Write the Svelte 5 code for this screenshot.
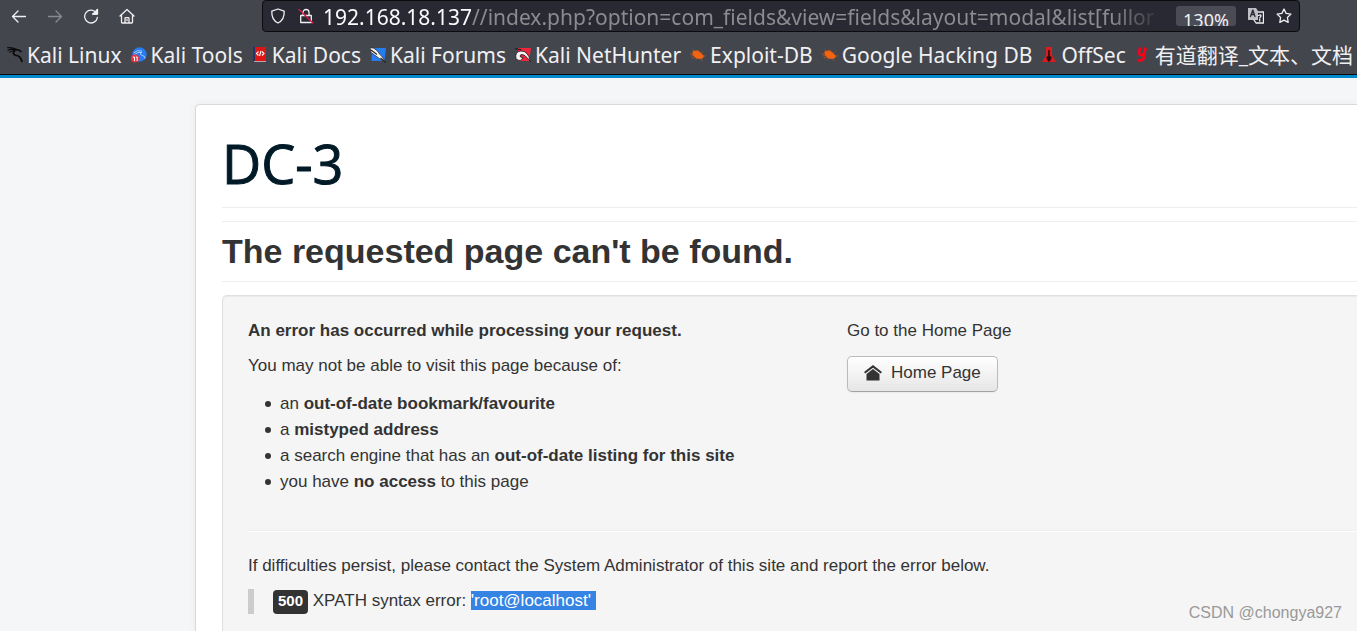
<script lang="ts">
	type Bookmark = { icon: string; label: string };

	const bookmarks: Bookmark[] = [
		{ icon: 'linux', label: 'Kali Linux' },
		{ icon: 'tools', label: 'Kali Tools' },
		{ icon: 'docs', label: 'Kali Docs' },
		{ icon: 'forums', label: 'Kali Forums' },
		{ icon: 'nethunter', label: 'Kali NetHunter' },
		{ icon: 'exploit', label: 'Exploit-DB' },
		{ icon: 'exploit', label: 'Google Hacking DB' },
		{ icon: 'offsec', label: 'OffSec' },
		{ icon: 'youdao', label: '有道翻译_文本、文档' }
	];
</script>

{#snippet favicon(name: string)}
	<svg class="favicon" viewBox="0 0 16 16" aria-hidden="true">
		{#if name === 'linux'}
			<path d="M0 .8Q5 0 9.500 2.500M.5 3.500Q5 1.200 8.500 3.500M2.500 5.500Q5 3 8 4.500" fill="none" stroke="#0b0b0c" stroke-width="1.1" />
			<path d="M8 2.800q4-.5 6.500 2.200M8 3Q4.500 6.500 8.500 8.300q5 0 6.500 6.700" fill="none" stroke="#0b0b0c" stroke-width="1.8" />
		{:else if name === 'tools'}
			<circle cx="8.5" cy="7.5" r="7.2" fill="#267bf0" />
			<path d="M2.500 6Q6 2.500 11 4M3.500 7.500Q7 4.500 11 5.500M10 5q-1.500 3 1.500 3.500 2.500.5 2.500 3" fill="none" stroke="#cfe2ff" stroke-width=".8" />
			<circle cx="4" cy="11.500" r="4" fill="#ec3440" />
			<path d="M1.800 10h1.700v4M5 10h1.200v4" fill="none" stroke="#fff" />
		{:else if name === 'docs'}
			<path d="M2 0h12v14H2z" fill="#dc1515" />
			<path d="M1 0h2v15H1z" fill="#20366b" />
			<path d="M2 14h12v1H2z" fill="#b9a9ae" />
			<path d="M6.500 4.500 4.500 6.500l2 2M10 4.500l2 2-2 2M9 4 7.500 9" fill="none" stroke="#fff" stroke-width="1.1" />
		{:else if name === 'forums'}
			<path d="M2 1h14l-1.500 13H1.500z" fill="#247cf0" />
			<path d="M0 .5q4 0 7 3l3 4q2 1 5.500 8-6-3.500-7.500-5L1 5.500z" fill="#f3f3ef" stroke="#202024" stroke-width=".7" />
			<path d="m1 3 6 4.500M10.500 11l5 4.500" stroke="#222" stroke-width="1.1" />
		{:else if name === 'nethunter'}
			<path d="M3 1h13l-2 13H3z" fill="#ee263a" />
			<path d="M1 12Q-.5 4.500 6 4q7-.5 9.500 10.500Q12 10 9 8 5 6.500 5 9q0 1.500 3 1.500-2 5-7 1.500z" fill="#f4f4f4" stroke="#171719" stroke-width=".8" />
			<path d="M0 1.500q3 1 6 1" fill="none" stroke="#171719" stroke-width="1" />
		{:else if name === 'exploit'}
			<path d="M2.500 4.500q4-2 7.500.5l4 4-1 2q-3 1.500-6 .5Q2 9 2.500 4.500z" fill="#f26411" />
			<path d="M5 5 3 2.500M8 5V2.500M11 6.500l2-2M5 10l-3 1M10 11l2.500 3M3 7H0M13 9h3M4 8.500 1 9M7 11l-1.500 2" stroke="#c8571a" stroke-width=".7" />
		{:else if name === 'offsec'}
			<path d="M5 0h6v8l4 7H1l4-7z" fill="#d81c20" />
			<path d="M7.200 3h1.600v6l2 1-1 3-1.800 2-1.800-2-1-3 2-1z" fill="#250c0e" />
		{:else}
			<path d="M5 .5 4 6q-.3 2 1.800 2 2 0 3.500-1.500l1-6M10.500 1 9 10q-.7 3.500-3.500 3.500H3" fill="none" stroke="#fc0018" stroke-width="2.600" />
		{/if}
	</svg>
{/snippet}

<div class="page">
	<header>
		<div class="toolbar">
			<nav class="controls" aria-label="Browser">
				<button aria-label="Back">
					<svg viewBox="0 0 16 16"><path d="M14.500 8.500H1.500M7 3 1.500 8.500 7 14" /></svg>
				</button>
				<button aria-label="Forward" disabled>
					<svg viewBox="0 0 16 16"><path d="M1.500 8.500h13M9 3 14.500 8.500 9 14" /></svg>
				</button>
				<button aria-label="Reload">
					<svg viewBox="0 0 16 16">
						<path d="M13.400 5A6.400 6.400 0 1 0 14.400 9.500M9.500 6H14V2" />
						<path d="M10 6h4.500V1.500z" class="solid" />
					</svg>
				</button>
				<button aria-label="Home">
					<svg viewBox="0 0 16 16"><path d="M1 8 8 1.500 15 8M2.500 7v7.200q0 .8.8.8h9.400q.8 0 .8-.8V7M6 15V10.500q0-.8.8-.8h2.400q.8 0 .8.8V15M8 11.500v1" /></svg>
				</button>
			</nav>

			<div class="address">
				<svg class="shield" viewBox="0 0 16 16"><path d="M8 1 14.200 3.200C14.500 9 12 13 8 15 4 13 1.500 9 1.800 3.200z" /></svg>
				<svg class="lock" viewBox="0 0 16 16">
					<path d="M5 7V4.500a3 3 0 0 1 6 0V7M2.700 7.500h10.600v7H2.700z" />
					<path d="m1 1.500 14 13.500" class="slash" />
				</svg>
				<div class="url" role="textbox" aria-label="Address" tabindex="0">
					192.168.18.137<span>//index.php?option=com_fields&view=fields&layout=modal&list[fullor</span>
				</div>
				<button class="zoom">130%</button>
				<button aria-label="Translate">
					<svg viewBox="0 0 16 16">
						<path d="M0 0h8l2 3v9H0z" class="leaf" />
						<path d="M2.500 8.500 4.800 2 7 8.500M3.300 6.500h3" class="mark" />
						<path d="M10.500 4h5v11H8l-2-3" />
						<path d="M10.500 7.500q2.500-1.500 2.500.5l-1.300 2M11.700 11.500v1.500" />
					</svg>
				</button>
				<button aria-label="Bookmark">
					<svg viewBox="0 0 16 16"><path d="m8 1 2.100 4.400 4.800.7-3.500 3.400.8 4.900L8 12.100l-4.200 2.300.8-4.900L1.100 6.100l4.800-.7z" /></svg>
				</button>
			</div>
		</div>

		<nav class="bookmarks" aria-label="Bookmarks">
			{#each bookmarks as bookmark}
				<a href="#bookmark">{@render favicon(bookmark.icon)}{bookmark.label}</a>
			{/each}
		</nav>
	</header>

	<main>
		<div class="brand">DC-3</div>
		<h1>The requested page can't be found.</h1>

		<section class="well">
			<div class="columns">
				<div>
					<p><strong>An error has occurred while processing your request.</strong></p>
					<p>You may not be able to visit this page because of:</p>
					<ul>
						<li>an <strong>out-of-date bookmark/favourite</strong></li>
						<li>a <strong>mistyped address</strong></li>
						<li>a search engine that has an <strong>out-of-date listing for this site</strong></li>
						<li>you have <strong>no access</strong> to this page</li>
					</ul>
				</div>
				<div>
					<p>Go to the Home Page</p>
					<a class="home" href="#home">
						<svg viewBox="0 0 18 16" aria-hidden="true">
							<path d="M9 0 18 7 16.700 8.500 9 2.700 1.300 8.500 0 7z" />
							<path d="M9 4 15.500 9V15.500h-13V9z" />
						</svg>
						Home Page
					</a>
				</div>
			</div>
			<hr />
			<p>If difficulties persist, please contact the System Administrator of this site and report the error below.</p>
			<blockquote>
				<span class="label">500</span> XPATH syntax error: <mark>'root@localhost'&nbsp;</mark>
			</blockquote>
		</section>
	</main>

	<div class="watermark">CSDN @chongya927</div>
</div>

<style>
	:global(body) {
		margin: 0;
		background: #f4f6f7;
	}

	.page {
		position: relative;
		display: flex;
		flex-direction: column;
		min-height: 100vh;
		overflow: hidden;
		color: #333;
		font: 17px/23px 'Liberation Sans', Arial, sans-serif;
	}

	header {
		background: #44464d;
		border-bottom: 3px solid #0088cc;
		color: #f0f0f2;
		font-family: 'Noto Sans', 'Noto Sans CJK SC', sans-serif;
	}

	.toolbar {
		display: flex;
		align-items: center;
		height: 32px;
	}

	.controls {
		display: flex;
		flex: 0 0 262px;
		gap: 20px;
		box-sizing: border-box;
		padding-left: 11px;
	}

	button {
		display: flex;
		padding: 0;
		border: 0;
		background: none;
		color: inherit;
		font: inherit;
	}

	button:disabled {
		opacity: 0.4;
	}

	.toolbar svg {
		flex: none;
		width: 16px;
		height: 16px;
		fill: none;
		stroke: #f0f0f2;
		stroke-width: 1.3;
		stroke-linejoin: round;
		stroke-linecap: round;
	}

	.toolbar .solid {
		fill: #f0f0f2;
	}

	.address {
		display: flex;
		align-items: center;
		flex: 1;
		min-width: 0;
		height: 30px;
		margin-right: 57px;
		padding: 0 7px;
		border: 1px solid #0b0b10;
		border-radius: 4px;
		background: #282933;
	}

	.toolbar .lock {
		margin: 0 9px 0 12px;
	}

	.toolbar .slash {
		stroke: #e21747;
	}

	.url {
		flex: 1;
		min-width: 0;
		padding-top: 2px;
		overflow: hidden;
		color: #fbfbfe;
		font-size: 21px;
		line-height: 30px;
		white-space: nowrap;
		mask-image: linear-gradient(to left, transparent 4px, #000 56px);
	}

	.url span {
		color: #8b8b91;
	}

	.zoom {
		width: 60px;
		height: 20px;
		margin: 0 12px 0 8px;
		padding-top: 3px;
		box-sizing: border-box;
		justify-content: center;
		overflow: hidden;
		border-radius: 3px;
		background: #4a4b55;
		font-size: 18px;
	}

	.address button + button {
		margin-right: 12px;
	}

	.address button:last-child {
		margin-right: 0;
	}

	.toolbar .leaf {
		fill: #bebfc3;
		stroke: none;
	}

	.toolbar .mark {
		stroke: #282933;
	}

	.bookmarks {
		display: flex;
		align-items: center;
		gap: 9px;
		height: 42px;
		padding-left: 7px;
		overflow: hidden;
		border-bottom: 1px solid #0c0c0d;
	}

	.bookmarks a {
		display: flex;
		flex: none;
		align-items: center;
		gap: 4px;
		padding-top: 4px;
		color: inherit;
		font-size: 21px;
		line-height: 34px;
		text-decoration: none;
		white-space: nowrap;
	}

	.favicon {
		width: 16px;
		height: 16px;
	}

	main {
		display: flex;
		flex: 1;
		flex-direction: column;
		margin: 26px 0 0 195px;
		padding: 26px 0 0 26px;
		border: 1px solid #d8d9da;
		border-width: 1px 0 0 1px;
		border-radius: 5px 0 0;
		background: #fff;
		box-shadow: 0 0 8px rgba(0, 0, 0, 0.05);
	}

	.brand {
		padding-bottom: 11px;
		border-bottom: 1px solid #eee;
		color: #001a27;
		font: 54px/65px 'Open Sans', sans-serif;
		-webkit-text-stroke: 1px #001a27;
	}

	h1 {
		margin: 13px 0;
		padding-bottom: 1px;
		border: 1px solid #eee;
		border-width: 1px 0;
		font-size: 34px;
		line-height: 58px;
	}

	.well {
		flex: 1;
		padding: 23px 0 16px 25px;
		border: 1px solid #e0e0e0;
		border-width: 1px 0 0 1px;
		border-radius: 5px 0 0;
		background: #f5f5f5;
		box-shadow: inset 0 1px 1px rgba(0, 0, 0, 0.05);
	}

	.columns {
		display: grid;
		grid-template-columns: 599px 1fr;
	}

	p {
		margin: 0 0 12px;
	}

	ul {
		margin: 14px 0 0;
		padding-left: 32px;
		line-height: 26px;
		list-style: none;
	}

	li::before {
		content: '';
		display: inline-block;
		width: 6px;
		height: 6px;
		margin: 0 9px 2px -15px;
		border-radius: 50%;
		background: #333;
	}

	.home {
		display: inline-flex;
		align-items: center;
		gap: 9px;
		padding: 4px 16px 7px;
		margin-top: 2px;
		border: 1px solid #bbb;
		border-bottom-color: #a2a2a2;
		border-radius: 5px;
		background: linear-gradient(#fff, #e6e6e6);
		box-shadow: 0 1px 2px rgba(0, 0, 0, 0.05);
		color: #333;
		text-decoration: none;
	}

	.home svg {
		width: 18px;
		height: 16px;
		fill: #333;
	}

	hr {
		margin: 35px 0 22px;
		border: 0;
		border-top: 1px solid #eee;
		border-bottom: 1px solid #fff;
	}

	blockquote {
		margin: 0;
		padding-left: 19px;
		border-left: 6px solid #ccc;
		line-height: 24px;
	}

	.label {
		display: inline-block;
		padding: 0 5px 2px;
		border-radius: 4px;
		background: #333;
		color: #fff;
		font-size: 15px;
		font-weight: bold;
		line-height: 22px;
	}

	mark {
		background: #3584e4;
		color: #fff;
	}

	.watermark {
		position: absolute;
		right: 15px;
		bottom: 7px;
		color: #999;
		font-size: 16px;
	}
</style>
